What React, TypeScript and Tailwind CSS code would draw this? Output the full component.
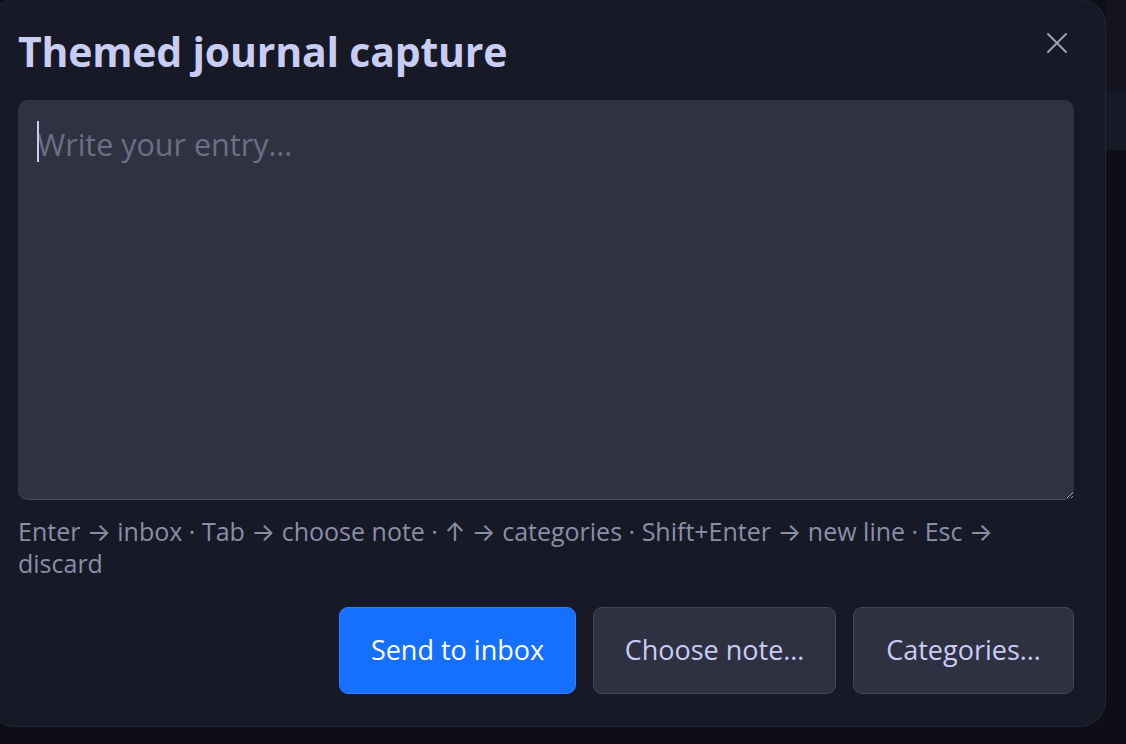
import { useState } from "react";

const FONT = "font-['Open_Sans',_'Noto_Sans',_sans-serif]";

const HINTS = [
  ["Enter", "inbox"],
  ["Tab", "choose note"],
  ["↑", "categories"],
  ["Shift+Enter", "new line"],
  ["Esc", "discard"],
];

function Glyph({ children }: { children: string }) {
  return <span className="font-['Inter',_'DejaVu_Sans',_sans-serif]">{children}</span>;
}

function CloseIcon() {
  return (
    <svg width="22" height="22" viewBox="0 0 22 22" fill="none" stroke="currentColor" strokeWidth="2" strokeLinecap="round">
      <path d="M2 2 L20 20 M20 2 L2 20" />
    </svg>
  );
}

export default function App() {
  const [entry, setEntry] = useState("");

  return (
    <div className={`flex h-[744px] w-full overflow-hidden bg-[#0d0e16] ${FONT}`}>
      <div className="-ml-[11px] -mt-px flex h-[728px] w-[1117px] shrink-0 flex-col rounded-[26px] border border-[#262838] bg-[#181926] pb-[32px] pl-[28px] pr-[31px] pt-[18px]">
        <div className="flex items-start justify-between">
          <h1 className="text-[41px] font-bold leading-[66px] tracking-[-0.005em] text-[#c9cdf4]">
            Themed journal capture
          </h1>
          <button type="button" aria-label="Close" className="mr-[6px] mt-[14px] text-[#9c9fb8]">
            <CloseIcon />
          </button>
        </div>

        <div className="relative mt-[16px]">
          <textarea
            value={entry}
            onChange={(e) => setEntry(e.target.value)}
            placeholder="Write your entry…"
            className="block h-[400px] w-full resize-y rounded-[10px] border-b border-[#4a4c60] bg-[#303242] px-[19px] pb-[20px] pt-[24px] text-[30.5px] leading-[40px] text-[#d5d8f0] outline-none placeholder:text-[#6b6e85]"
          />
          {entry === "" && <span className="pointer-events-none absolute left-[19px] top-[21px] h-[41px] w-[2px] bg-[#c9cdf4]" />}
        </div>

        <p className="mt-[16px] text-[25px] leading-[31px] text-[#8b8ea7]">
          {HINTS.map(([key, action], i) => (
            <span key={key}>
              {key === "↑" ? <Glyph>↑</Glyph> : key} <Glyph>→</Glyph> {action}
              {i < HINTS.length - 1 ? " · " : ""}
            </span>
          ))}
        </p>

        <div className="mt-auto flex justify-end gap-[17px]">
          <button type="button" className="h-[87px] w-[237px] rounded-[9px] border border-[#3a7cff] bg-[#1570ff] text-[27px] text-white">
            Send to inbox
          </button>
          <button type="button" className="h-[87px] w-[243px] rounded-[9px] border border-[#45475a] bg-[#2f3142] text-[27px] text-[#c9cdf4]">
            Choose note…
          </button>
          <button type="button" className="h-[87px] w-[221px] rounded-[9px] border border-[#45475a] bg-[#2f3142] text-[27px] text-[#c9cdf4]">
            Categories…
          </button>
        </div>
      </div>
      <div className="flex flex-1 flex-col">
        <div className="h-[91px] bg-[#131420]" />
        <div className="h-[59px] bg-[#171926]" />
        <div className="flex-1 bg-[#0d0e16]" />
      </div>
    </div>
  );
}
